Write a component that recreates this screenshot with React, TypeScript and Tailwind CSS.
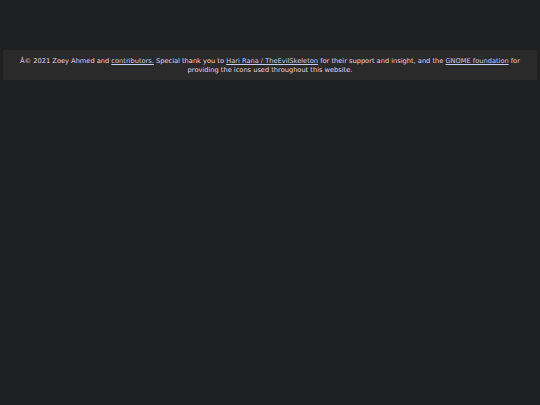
export default function App() {
  return (
    <div className="min-h-[405px] bg-[#1f2022] pt-[50px] px-[3px] font-['DejaVu_Sans',sans-serif]">
      <footer className="bg-[#2a2a2b] px-1 pt-[7px] pb-[6px] text-center text-[6.65px] leading-[8.5px] text-[#ecd0e0]">
        Â© 2021 Zoey Ahmed and{" "}
        <a href="#" className="underline text-[#c8cbf0]">contributors.</a> Special thank you to{" "}
        <a href="#" className="underline text-[#c8cbf0]">Hari Rana / TheEvilSkeleton</a> for their support and insight, and the{" "}
        <a href="#" className="underline text-[#c8cbf0]">GNOME foundation</a> for providing the icons used throughout this website.
      </footer>
    </div>
  );
}
